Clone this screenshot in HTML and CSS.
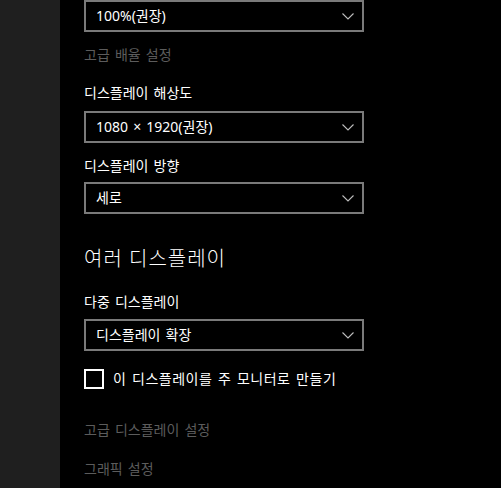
FILE: index.html
```html
<!DOCTYPE html>
<html lang="ko">
<head>
<meta charset="utf-8">
<link rel="stylesheet" href="styles.css">
</head>
<body>
<div class="app">
  <aside class="sidebar"></aside>
  <main class="content">
    <div class="select s1"><span>100%(권장)</span><svg class="chev" width="12" height="7" viewBox="0 0 12 7"><polyline points="0.5,0.5 6,6 11.5,0.5"/></svg></div>
    <div class="link l1">고급 배율 설정</div>
    <div class="label lb1">디스플레이 해상도</div>
    <div class="select s2"><span>1080 × 1920(권장)</span><svg class="chev" width="12" height="7" viewBox="0 0 12 7"><polyline points="0.5,0.5 6,6 11.5,0.5"/></svg></div>
    <div class="label lb2">디스플레이 방향</div>
    <div class="select s3"><span>세로</span><svg class="chev" width="12" height="7" viewBox="0 0 12 7"><polyline points="0.5,0.5 6,6 11.5,0.5"/></svg></div>
    <h2 class="heading">여러 디스플레이</h2>
    <div class="label lb3">다중 디스플레이</div>
    <div class="select s4"><span>디스플레이 확장</span><svg class="chev" width="12" height="7" viewBox="0 0 12 7"><polyline points="0.5,0.5 6,6 11.5,0.5"/></svg></div>
    <label class="check"><span class="box"></span><span>이 디스플레이를 주 모니터로 만들기</span></label>
    <div class="link l2">고급 디스플레이 설정</div>
    <div class="link l3">그래픽 설정</div>
  </main>
</div>
</body>
</html>
```
FILE: styles.css
```css
html, body {
  margin: 0;
  padding: 0;
  background: #000;
  height: 100%;
  overflow: hidden;
}
body {
  font-family: "Noto Sans", "Noto Sans CJK KR", sans-serif;
  font-size: 14px;
  line-height: 20px;
  color: #fff;
  word-spacing: 1.5px;
}
.app {
  display: flex;
  height: 488px;
}
.sidebar {
  width: 60px;
  flex: none;
  background: #1f1f1f;
}
.content {
  flex: 1;
  padding-left: 24px;
  display: flex;
  flex-direction: column;
  align-items: flex-start;
}
.select {
  box-sizing: border-box;
  width: 280px;
  height: 32px;
  border: 2px solid #7a7a7a;
  display: flex;
  align-items: center;
  justify-content: space-between;
  padding: 0 8px 0 10px;
}
.chev {
  display: block;
  fill: none;
  stroke: #bdbdbd;
  stroke-width: 1.1;
}
.s1 { margin-top: 0; }
.link { color: #5c5c5c; }
.l1 { margin-top: 13px; }
.lb1 { margin-top: 18px; }
.s2 { margin-top: 8px; }
.lb2 { margin-top: 13px; }
.s3 { margin-top: 6px; }
.heading {
  margin: 31px 0 0;
  font-size: 20px;
  line-height: 28px;
  font-weight: 300;
  letter-spacing: 1px;
  word-spacing: 0;
}
.lb3 { margin-top: 19px; }
.s4 { margin-top: 7px; }
.check {
  margin-top: 18px;
  display: flex;
  align-items: center;
  gap: 9px;
  letter-spacing: 0.5px;
}
.box {
  box-sizing: border-box;
  width: 20px;
  height: 20px;
  border: 2px solid #fff;
  flex: none;
}
.l2 { margin-top: 31px; }
.l3 { margin-top: 19px; }
```
